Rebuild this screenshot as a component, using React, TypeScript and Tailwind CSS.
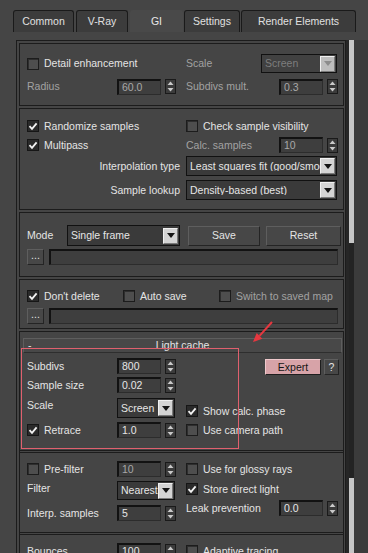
import React from "react";

function Check({ on }: { on?: boolean }) {
  return on ? (
    <span className="w-[12px] h-[12px] shrink-0 border border-[#161616] bg-[#2a2a2a] flex items-center justify-center">
      <svg width="10" height="9" viewBox="0 0 10 9">
        <path d="M1.5 4.2 L4 6.8 L8.6 1.4" stroke="#f2f2f2" strokeWidth="1.8" fill="none" />
      </svg>
    </span>
  ) : (
    <span className="w-[12px] h-[12px] shrink-0 border border-[#1c1c1c] bg-[#4e4e4e] shadow-[inset_1px_1px_0_#2e2e2e]" />
  );
}

function CheckLabel({ on, label, dim }: { on?: boolean; label: string; dim?: boolean }) {
  return (
    <span className="flex items-center gap-[5px] whitespace-nowrap">
      <Check on={on} />
      <span className={dim ? "text-[#a2a2a2]" : "text-[#e4e4e4]"}>{label}</span>
    </span>
  );
}

function Spin() {
  return (
    <span className="w-[11px] h-[15px] shrink-0 border border-[#1a1a1a] bg-[#3b3b3b] flex items-center justify-center">
      <svg width="7" height="11" viewBox="0 0 7 11">
        <path d="M3.5 0.5 L6.5 4 L0.5 4 Z" fill="#c9c9c9" />
        <path d="M0.5 7 L6.5 7 L3.5 10.5 Z" fill="#c9c9c9" />
      </svg>
    </span>
  );
}

function NumSpin({ v, dim }: { v: string; dim?: boolean }) {
  return (
    <span className="flex items-center gap-[4px]">
      <span
        className={
          "w-[44px] h-[16px] shrink-0 bg-[#3e3e3e] border-t-2 border-l-2 border-r border-b border-[#121212] border-r-[#2c2c2c] border-b-[#2c2c2c] flex items-center pl-[3px] " +
          (dim ? "text-[#a8a8a8]" : "text-[#e6e6e6]")
        }
      >
        {v}
      </span>
      <Spin />
    </span>
  );
}

function Drop({ text, cls, dim }: { text: string; cls: string; dim?: boolean }) {
  return (
    <span
      className={
        cls +
        " shrink-0 border border-[#111111] flex items-center pl-[3px] pr-[1px] " +
        (dim ? "bg-[#414141] text-[#7e7e7e]" : "bg-[#3a3a3a] text-[#e6e6e6]")
      }
    >
      <span className="flex-1 whitespace-nowrap overflow-hidden">{text}</span>
      <span
        className={
          "w-[15px] h-[16px] shrink-0 border border-[#f0f0f0] border-r-[#7a7a7a] border-b-[#7a7a7a] flex items-center justify-center " +
          (dim ? "bg-[#bdbdbd]" : "bg-[#d4d4d4]")
        }
      >
        <svg width="8" height="5" viewBox="0 0 8 5">
          <path d="M0 0 L8 0 L4 5 Z" fill={dim ? "#8c8c8c" : "#141414"} />
        </svg>
      </span>
    </span>
  );
}

function Btn({ children, cls }: { children: React.ReactNode; cls: string }) {
  return (
    <span
      className={
        cls +
        " shrink-0 border border-[#242424] border-t-[#5e5e5e] border-l-[#5e5e5e] bg-[#474747] flex items-center justify-center text-[#e4e4e4]"
      }
    >
      {children}
    </span>
  );
}

function Field() {
  return (
    <div className="h-[16px] flex items-center">
      <Btn cls="w-[17px] h-[16px]">
        <span className="leading-none -mt-[3px]">...</span>
      </Btn>
      <span className="ml-[5px] w-[289px] h-[16px] bg-[#3e3e3e] border-t-2 border-l-2 border-r border-b border-[#121212] border-r-[#2c2c2c] border-b-[#2c2c2c]" />
    </div>
  );
}

function Label({ children, cls, dim }: { children: React.ReactNode; cls: string; dim?: boolean }) {
  return (
    <span className={cls + " shrink-0 whitespace-nowrap " + (dim ? "text-[#a2a2a2]" : "text-[#e4e4e4]")}>
      {children}
    </span>
  );
}

function Tab({ children, cls, active }: { children: React.ReactNode; cls: string; active?: boolean }) {
  return (
    <div
      className={
        cls +
        " h-[22px] flex items-center justify-center rounded-t-[3px] " +
        (active ? "bg-[#494949] text-[#e8e8e8]" : "bg-[#3c3c3c] border border-b-0 border-[#1a1a1a] text-[#e0e0e0]")
      }
    >
      {children}
    </div>
  );
}

export default function App() {
  return (
    <div className="relative w-[368px] h-[553px] overflow-hidden bg-[#454545] text-[10.5px] leading-none [font-family:'Liberation_Sans',Arial,sans-serif] text-[#e4e4e4]">
      {/* Tabs */}
      <div className="flex pl-[13px] pt-[10px] h-[32px]">
        <Tab cls="w-[61px]">Common</Tab>
        <Tab cls="w-[52px] ml-[2px]">V-Ray</Tab>
        <Tab cls="w-[53px] ml-[2px]" active>
          GI
        </Tab>
        <Tab cls="w-[56px] ml-[1px]">Settings</Tab>
        <Tab cls="w-[115px] ml-[1px]">Render Elements</Tab>
      </div>

      <div className="flex mt-[8px] h-[513px]">
        {/* Panel */}
        <div className="ml-[16px] w-[330px] h-full overflow-hidden border-l border-t border-r border-[#1c1c1c] pl-[2px] pt-[2px] pr-[1px] flex flex-col">
          {/* Section 1 */}
          <div className="border border-[#1c1c1c] pl-[7px] pt-[10px] pb-[10px]">
            <div className="h-[19px] flex items-center">
              <span className="w-[159px] shrink-0">
                <CheckLabel label="Detail enhancement" />
              </span>
              <Label cls="w-[75px]" dim>
                Scale
              </Label>
              <Drop text="Screen" cls="w-[76px] h-[19px]" dim />
            </div>
            <div className="h-[17px] mt-[5px] flex items-center">
              <Label cls="w-[90px]" dim>
                Radius
              </Label>
              <span className="w-[69px] shrink-0">
                <NumSpin v="60.0" dim />
              </span>
              <Label cls="w-[93px]" dim>
                Subdivs mult.
              </Label>
              <NumSpin v="0.3" dim />
            </div>
          </div>

          {/* Section 2 */}
          <div className="mt-[2px] border border-[#1c1c1c] pl-[7px] pt-[9px] pb-[9px]">
            <div className="h-[16px] flex items-center">
              <span className="w-[159px] shrink-0">
                <CheckLabel on label="Randomize samples" />
              </span>
              <CheckLabel label="Check sample visibility" />
            </div>
            <div className="h-[16px] mt-[3px] flex items-center">
              <span className="w-[159px] shrink-0">
                <CheckLabel on label="Multipass" />
              </span>
              <Label cls="w-[93px]" dim>
                Calc. samples
              </Label>
              <NumSpin v="10" dim />
            </div>
            <div className="h-[20px] mt-[3px] flex items-center">
              <Label cls="w-[159px] text-right pr-[6px]">Interpolation type</Label>
              <Drop text="Least squares fit (good/smooth)" cls="w-[151px] h-[20px]" />
            </div>
            <div className="h-[20px] mt-[4px] flex items-center">
              <Label cls="w-[159px] text-right pr-[6px]">Sample lookup</Label>
              <Drop text="Density-based (best)" cls="w-[151px] h-[20px]" />
            </div>
          </div>

          {/* Section 3 */}
          <div className="mt-[2px] border border-[#1c1c1c] pl-[7px] pt-[12px] pb-[11px]">
            <div className="h-[21px] flex items-center">
              <Label cls="w-[40px]">Mode</Label>
              <Drop text="Single frame" cls="w-[113px] h-[21px]" />
              <Btn cls="ml-[8px] w-[72px] h-[20px]">Save</Btn>
              <Btn cls="ml-[6px] w-[75px] h-[20px]">Reset</Btn>
            </div>
            <div className="mt-[3px]">
              <Field />
            </div>
          </div>

          {/* Section 4 */}
          <div className="mt-[2px] border border-[#1c1c1c] pl-[7px] pt-[8px] pb-[4px]">
            <div className="h-[16px] flex items-center">
              <span className="w-[96px] shrink-0">
                <CheckLabel on label="Don't delete" />
              </span>
              <span className="w-[96px] shrink-0">
                <CheckLabel label="Auto save" />
              </span>
              <CheckLabel label="Switch to saved map" dim />
            </div>
            <div className="mt-[4px]">
              <Field />
            </div>
          </div>

          {/* Light cache rollout */}
          <div className="mt-[2px] flex-1 border-l border-t border-r border-[#1c1c1c]">
            <div className="mt-[6px] ml-[3px] mr-[1px] h-[15px] border border-[#5e5e5e] border-b-[#2e2e2e] bg-[#484848] grid grid-cols-[1fr_auto_1fr] items-center">
              <span className="pl-[4px]">-</span>
              <span>Light cache</span>
              <span />
            </div>

            {/* Group 1 */}
            <div className="pl-[7px] pt-[5px] pb-[12px] border-b border-[#1c1c1c] flex">
              <div className="w-[159px] shrink-0 flex flex-col">
                <div className="h-[16px] flex items-center">
                  <Label cls="w-[90px]">Subdivs</Label>
                  <NumSpin v="800" />
                </div>
                <div className="h-[16px] mt-[3px] flex items-center">
                  <Label cls="w-[90px]">Sample size</Label>
                  <NumSpin v="0.02" />
                </div>
                <div className="h-[20px] mt-[5px] flex items-start">
                  <Label cls="w-[90px] h-[14px] flex items-center">Scale</Label>
                  <Drop text="Screen" cls="w-[58px] h-[20px]" />
                </div>
                <div className="h-[16px] mt-[4px] flex items-center">
                  <span className="w-[90px] shrink-0">
                    <CheckLabel on label="Retrace" />
                  </span>
                  <NumSpin v="1.0" />
                </div>
              </div>
              <div className="flex-1 flex flex-col">
                <div className="h-[16px] mt-[1px] flex items-center">
                  <span className="ml-[79px] w-[56px] h-[16px] border border-[#1e1e1e] border-t-[#efc9cc] border-l-[#efc9cc] bg-[#d7a3a8] text-[#151515] flex items-center justify-center">
                    Expert
                  </span>
                  <Btn cls="ml-[3px] w-[15px] h-[16px]">?</Btn>
                </div>
                <div className="h-[16px] mt-[28px] flex items-center">
                  <CheckLabel on label="Show calc. phase" />
                </div>
                <div className="h-[16px] mt-[3px] flex items-center">
                  <CheckLabel label="Use camera path" />
                </div>
              </div>
            </div>

            {/* Group 2 */}
            <div className="mt-[1px] border-t border-b border-[#1c1c1c] pl-[7px] pt-[8px] pb-[11px] flex">
              <div className="w-[159px] shrink-0 flex flex-col">
                <div className="h-[16px] flex items-center">
                  <span className="w-[90px] shrink-0">
                    <CheckLabel label="Pre-filter" />
                  </span>
                  <NumSpin v="10" dim />
                </div>
                <div className="h-[19px] mt-[4px] flex items-start">
                  <Label cls="w-[90px] h-[14px] flex items-center">Filter</Label>
                  <Drop text="Nearest" cls="w-[58px] h-[19px]" />
                </div>
                <div className="h-[16px] mt-[5px] flex items-center">
                  <Label cls="w-[90px]">Interp. samples</Label>
                  <NumSpin v="5" />
                </div>
              </div>
              <div className="flex-1 flex flex-col">
                <div className="h-[16px] flex items-center">
                  <CheckLabel label="Use for glossy rays" />
                </div>
                <div className="h-[16px] mt-[4px] flex items-center">
                  <CheckLabel on label="Store direct light" />
                </div>
                <div className="h-[16px] mt-[3px] flex items-center">
                  <Label cls="w-[93px]">Leak prevention</Label>
                  <NumSpin v="0.0" />
                </div>
              </div>
            </div>

            {/* Group 3 */}
            <div className="mt-[1px] border-t border-[#1c1c1c] pl-[7px] pt-[8px] flex">
              <div className="w-[159px] shrink-0 h-[16px] flex items-center">
                <Label cls="w-[90px]">Bounces</Label>
                <NumSpin v="100" />
              </div>
              <div className="h-[16px] flex items-center">
                <CheckLabel label="Adaptive tracing" />
              </div>
            </div>
          </div>
        </div>

        {/* Scrollbar */}
        <div className="w-[22px] h-full flex">
          <div className="w-[3px] h-full bg-[#262626]" />
          <div className="w-[5px] h-full flex flex-col">
            <div className="h-[203px] bg-[#c6c6c6]" />
            <div className="h-[235px] bg-[#232323]" />
            <div className="flex-1 bg-[#c6c6c6]" />
          </div>
          <div className="flex-1 h-full bg-[#3b3b3b]" />
        </div>
      </div>

      {/* Annotation overlay: red box */}
      <div className="absolute left-[21px] top-[348px] w-[218px] h-[101px] border border-[#e0606e] pointer-events-none" />
      {/* Annotation overlay: red arrow */}
      <svg className="absolute left-[248px] top-[318px]" width="30" height="30" viewBox="0 0 30 30">
        <path d="M24 4 L11.5 17.8" stroke="#e6373f" strokeWidth="2" fill="none" />
        <path d="M5 24 L14.3 20.7 L8.7 14.9 Z" fill="#e6373f" />
      </svg>
    </div>
  );
}
